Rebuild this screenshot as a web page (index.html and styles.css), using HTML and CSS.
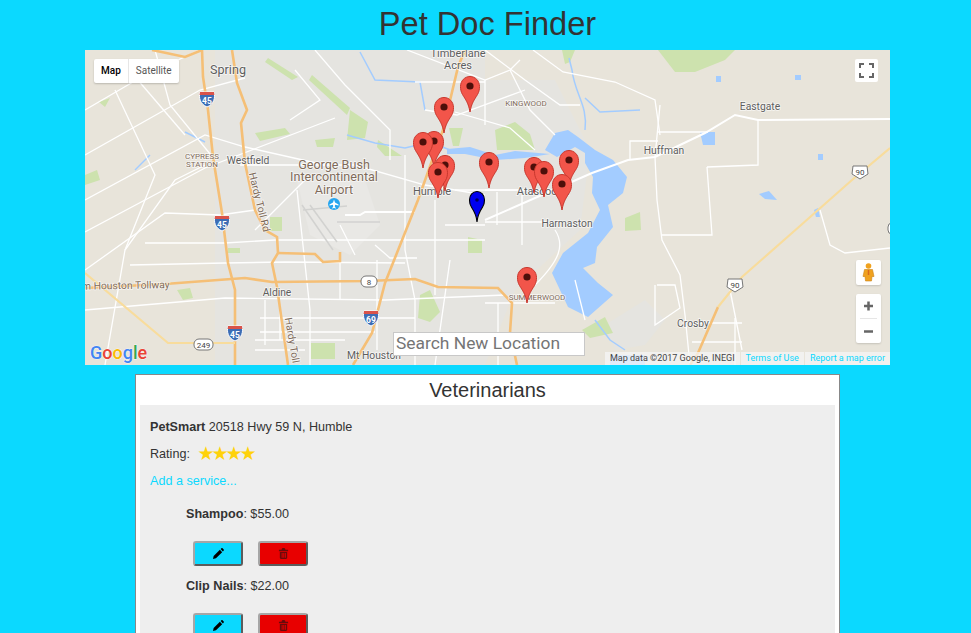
FILE: index.html
```html
<!DOCTYPE html>
<html lang="en">
<head>
<meta charset="UTF-8">
<title>Pet Doc Finder</title>
<link rel="stylesheet" href="styles.css">
</head>
<body>
<h1 class="page-title">Pet Doc Finder</h1>

<div class="map">
  <svg class="map-canvas" viewBox="0 0 805 315" width="805" height="315">
    <defs>
      <symbol id="pin" viewBox="0 0 20 36" overflow="visible">
        <path d="M10 36C8.5 27 5.5 23.5 2.5 18.5C1 16 .5 13.5 .5 10.5C.5 4.8 4.8 .5 10 .5C15.2 .5 19.5 4.8 19.5 10.5C19.5 13.5 19 16 17.5 18.5C14.5 23.5 11.5 27 10 36Z" fill="#f2554a" stroke="#c8372d" stroke-width="1"/>
        <circle cx="10" cy="10" r="3.6" fill="#4d0f0a"/>
      </symbol>
      <symbol id="pin-blue" viewBox="0 0 16 31" overflow="visible">
        <path d="M8 31C7.6 24 5 20 2.4 16C1 13.8 .5 11.8 .5 9C.5 4.2 3.8 .5 8 .5C12.2 .5 15.5 4.2 15.5 9C15.5 11.8 15 13.8 13.6 16C11 20 8.4 24 8 31Z" fill="#0000f0" stroke="#000" stroke-width="1.1"/>
        <circle cx="8" cy="9" r="1.8" fill="#00005a"/>
      </symbol>
      <symbol id="interstate" viewBox="0 0 16 15" overflow="visible">
        <path d="M1 0H15C16.500 6 15 12 8 15C1 12 -.5 6 1 0Z" fill="#3c6db5" stroke="#fff" stroke-width="1"/>
        <path d="M1 0H15L15.400 3H.6Z" fill="#d9534a"/>
      </symbol>
    </defs>

    <!-- land and town areas -->
    <rect width="805" height="315" fill="#e8e4da"/>
    <path class="urban" d="M130 0H400V30H470L505 100L495 180L430 240L400 315H130Z"/>
    <path class="urban" d="M520 275L560 250L580 270L560 295L530 300Z"/>
    <path d="M212 130H280L295 175L265 205L225 185Z" fill="#e9e8e5"/>

    <!-- parks -->
    <g class="park">
      <path d="M183 8L213 27L207 30L180 12Z"/>
      <path d="M227 25L265 58L262 65L224 30Z"/>
      <path d="M265 60L283 72L280 88L262 90Z"/>
      <path d="M230 90L250 88L248 97L232 97Z"/>
      <path d="M293 90L317 106L300 106L292 97Z"/>
      <path d="M170 83L200 78L205 84L175 91Z"/>
      <path d="M185 167H197V181H185Z"/>
      <path d="M143 198H155V203H143Z"/>
      <path d="M92 240L105 238L108 248L98 250Z"/>
      <path d="M226 293H250V309H226Z"/>
      <path d="M335 245L345 240L355 262L345 272L333 268Z"/>
      <path d="M383 187L397 190V203H383Z"/>
      <path d="M364 78H378L374 96L368 96Z"/>
      <path d="M410 80L430 72L445 84L450 100H412Z"/>
      <path d="M477 0H490L485 12L480 14Z"/>
      <path d="M573 0H650L640 10L610 22H590Z" fill="#d3e2bf"/>
      <path d="M497 280L520 267L528 283L505 288Z"/>
      <path d="M540 168L555 162L556 180L540 181Z" fill="#d3e2bf"/>
      <path d="M0 125L12 120L15 130L0 135Z"/>
      <path d="M14 52L25 48L20 57Z"/>
    </g>

    <!-- lake and creeks -->
    <g class="water">
      <path d="M542 127L538 143L523 155L528 177L512 197L510 213L498 218L513 233L528 245L503 267L483 257L467 223L478 203L503 183L515 160L507 143L508 127L500 113L500 103L490 97L472 107L460 100L470 83L483 80L493 87L510 100L528 110Z"/>
      <path d="M362 99L385 97L410 105L430 101L465 104L440 108L410 110L380 104L362 104Z"/>
      <path d="M615 82H630V95H618Z"/>
      <path d="M733 104H738V110H733Z"/>
      <path d="M674 144L684 141L692 150L680 149Z"/>
      <path d="M631 26H636V32H631Z"/>
      <path d="M785 15L792 13L788 23L780 24Z"/>
      <path d="M710 25H716V30H710Z"/>
      <path d="M729 160L733 158L735 167H731Z"/>
      <path d="M525 305H560V315H525Z"/>
    </g>
    <g class="creek">
      <path d="M500 80C503 55 490 45 487 20L484 8"/>
      <path d="M500 48L515 62L555 60"/>
      <path d="M262 85L290 93L320 98L345 92L365 100"/>
      <path d="M275 2L290 30L335 32L340 60"/>
      <path d="M510 270L525 290L540 300"/>
      <path d="M100 82L120 92"/>
      <path d="M65 105L50 120"/>
    </g>

    <!-- local roads -->
    <g class="road-thin">
      <path d="M0 60L60 25L115 0"/><path d="M0 105L115 40L160 28"/><path d="M0 150L120 85L160 97L240 115"/>
      <path d="M0 182L120 118L250 68"/><path d="M0 220L80 163L135 165L170 160"/><path d="M20 315L40 200L90 130L120 115"/>
      <path d="M30 40L70 125L40 200"/><path d="M70 0L85 55L130 110"/><path d="M40 15L100 85"/>
      <path d="M60 193H140L190 190H400"/><path d="M45 215L140 213L200 212L320 213"/><path d="M0 260L140 248L300 250L420 245"/>
      <path d="M175 268H330"/><path d="M175 282H290"/><path d="M170 290H260"/><path d="M170 300H220"/>
      <path d="M205 70L235 50L210 20"/><path d="M230 0L260 35L305 80V110"/><path d="M155 115H270L340 135L400 145"/>
      <path d="M170 180L220 130"/><path d="M212 140L225 260V315"/><path d="M255 175L270 205"/>
      <path d="M320 105V200L330 250V315"/><path d="M292 210V300"/><path d="M255 212V250"/><path d="M180 250V295"/><path d="M195 255V290"/>
      <path d="M350 150V245"/><path d="M365 210L350 315"/><path d="M330 32H400"/>
      <path d="M322 0L400 30L425 20L435 10"/><path d="M400 30V75"/><path d="M340 60L372 65L440 40"/>
      <path d="M370 62L425 78L450 100"/><path d="M425 20L445 60L470 85"/><path d="M400 0L440 30L475 55L495 55"/>
      <path d="M448 0L478 22L530 32L570 50L575 85"/><path d="M575 55L570 107L572 150L577 190L595 225L600 265L605 315"/>
      <path d="M573 82H623"/><path d="M545 110V91H573"/><path d="M608 273H657"/><path d="M607 292H657"/>
      <path d="M622 117L673 115V70"/><path d="M622 117L627 185H577"/><path d="M735 160L745 195L760 203L805 198"/>
      <path d="M572 235H590L595 258L570 275V235"/><path d="M400 140H480"/><path d="M412 142V175"/><path d="M437 145V195"/>
      <path d="M400 172H470"/><path d="M470 180C480 195 475 210 450 235"/><path d="M490 230L500 270"/><path d="M400 253H470"/><path d="M413 253V315"/>
      <path d="M650 268V315"/><path d="M645 240L657 300"/>
      <path d="M332 208H305L290 195"/><path d="M370 140H450"/><path d="M360 175H400"/>
    </g>
    <path class="road-wide" d="M400 170L507 123L543 110L570 107L620 83L650 65L673 70L805 69"/>
    <path class="road-wide" d="M260 165L275 165L280 162H330"/>

    <!-- airport runways -->
    <g class="runway">
      <path d="M217 155L248 200"/><path d="M225 155L252 192"/><path d="M218 160L262 156"/><path d="M252 172H295"/>
    </g>

    <!-- highways -->
    <g class="road-hwy">
      <path d="M67 0L100 7L117 0"/>
      <path d="M117 0L118 27L123 60L128 107L137 163L143 213L150 240V315"/>
      <path d="M147 0L152 33L162 60L156 73L160 113L170 160L180 180L192 187L193 203L187 213L192 237L203 315"/>
      <path d="M193 203L230 204L238 212L255 211V202"/>
      <path d="M0 238L80 234L133 230L160 228L187 232L283 231L330 229L353 237L413 238L427 253L425 283L432 315"/>
      <path d="M380 0L373 17L358 80L333 150L300 233L287 283L268 315"/>
      <path d="M633 257L613 303L605 315"/>
    </g>
    <path class="road-toll" d="M0 223L83 293H150"/>
    <path class="road-toll" d="M805 98L767 130L707 183L657 227L633 257"/>

    <!-- labels -->
    <g class="label">
      <text x="143" y="24" class="label-big">Spring</text>
      <text x="373" y="7" class="label-md">Timberlane</text>
      <text x="373" y="19" class="label-md">Acres</text>
      <text x="163" y="114" class="label-sm">Westfield</text>
      <text x="347" y="145" class="label-md">Humble</text>
      <text x="458" y="145" class="label-md">Atascocita</text>
      <text x="482" y="177" class="label-sm">Harmaston</text>
      <text x="579" y="104" class="label-sm">Huffman</text>
      <text x="675" y="60" class="label-sm">Eastgate</text>
      <text x="608" y="277" class="label-sm">Crosby</text>
      <text x="192" y="246" class="label-sm">Aldine</text>
      <text x="289" y="309" class="label-sm">Mt Houston</text>
    </g>
    <g class="label label-brown">
      <text x="249" y="119" class="label-air">George Bush</text>
      <text x="249" y="131" class="label-air">Intercontinental</text>
      <text x="249" y="144" class="label-air">Airport</text>
      <text x="117" y="109" class="label-area">CYPRESS</text>
      <text x="117" y="117" class="label-area">STATION</text>
      <text x="441" y="56" class="label-area">KINGWOOD</text>
      <text x="452" y="250" class="label-area">SUMMERWOOD</text>
      <text x="35" y="239" transform="rotate(-1 35 239)" class="label-sm">Sam Houston Tollway</text>
      <text x="171" y="153" transform="rotate(76 171 153)" class="label-sm">Hardy Toll Rd</text>
      <text x="205" y="298" transform="rotate(80 205 298)" class="label-sm">Hardy Toll Rd</text>
    </g>

    <!-- shields -->
    <g class="shield-i">
      <use href="#interstate" x="114" y="42" width="16" height="15"/><text x="122" y="54">45</text>
      <use href="#interstate" x="129" y="166" width="16" height="15"/><text x="137" y="178">45</text>
      <use href="#interstate" x="142" y="276" width="16" height="15"/><text x="150" y="288">45</text>
      <use href="#interstate" x="278" y="261" width="16" height="15"/><text x="286" y="273">69</text>
    </g>
    <g class="shield-s">
      <rect x="276" y="226" width="16" height="11" rx="5"/><text x="284" y="234.500">8</text>
      <rect x="109" y="289" width="19" height="11" rx="5"/><text x="118.500" y="297.500">249</text>
      <path d="M768 116H782L783 124L775 129L767 124Z"/><text x="775" y="125">90</text>
      <path d="M643 229H657L658 237L650 242L642 237Z"/><text x="650" y="238">90</text>
      <rect x="803" y="173" width="10" height="11" rx="4"/>
    </g>
    <circle cx="249" cy="154" r="6" fill="#25a5ef"/>
    <path d="M249 149.500L250 152.500L253.500 154.500V155.500L250 154.800L249.800 157L251 158V158.500L249 158L247 158.500V158L248.200 157L248 154.800L244.500 155.500V154.500L248 152.500Z" fill="#fff"/>

    <!-- pins, back to front -->
    <use href="#pin" x="375" y="26" width="20" height="36"/>
    <use href="#pin" x="349" y="47" width="20" height="36"/>
    <use href="#pin" x="339" y="81" width="20" height="36"/>
    <use href="#pin" x="328" y="82" width="20" height="36"/>
    <use href="#pin" x="350" y="105" width="20" height="36"/>
    <use href="#pin" x="343" y="112" width="20" height="36"/>
    <use href="#pin" x="394" y="102" width="20" height="36"/>
    <use href="#pin" x="474" y="100" width="20" height="36"/>
    <use href="#pin" x="439" y="107" width="20" height="36"/>
    <use href="#pin" x="449" y="111" width="20" height="36"/>
    <use href="#pin" x="467" y="124" width="20" height="36"/>
    <use href="#pin" x="432" y="217" width="20" height="36"/>
    <use href="#pin-blue" x="384" y="141" width="16" height="31"/>

    <text class="google" x="5" y="309"><tspan fill="#4285f4">G</tspan><tspan fill="#ea4335">o</tspan><tspan fill="#fbbc05">o</tspan><tspan fill="#4285f4">g</tspan><tspan fill="#34a853">l</tspan><tspan fill="#ea4335">e</tspan></text>
  </svg>

  <div class="map-type">
    <span class="map-type-btn map-type-on">Map</span>
    <span class="map-type-btn">Satellite</span>
  </div>

  <div class="map-ctl fullscreen">
    <svg viewBox="0 0 23 23" width="23" height="23"><path d="M5 9V5H9M14 5H18V9M18 14V18H14M9 18H5V14" fill="none" stroke="#666" stroke-width="2"/></svg>
  </div>

  <div class="map-ctl pegman">
    <svg viewBox="0 0 25 25" width="25" height="25">
      <circle cx="12.500" cy="6" r="2.800" fill="#f0a21f"/>
      <path d="M8.500 9.500H16.500L18 16.500H16L15.500 21H9.500L9 16.500H7Z" fill="#f0a21f" stroke="#c9831a" stroke-width=".6"/>
      <path d="M12.500 10V15" stroke="#d9691e" stroke-width="1.500"/>
    </svg>
  </div>

  <div class="map-ctl zoom">
    <svg viewBox="0 0 25 49" width="25" height="49">
      <path d="M12.500 7.500V16.500M8 12H17" stroke="#666" stroke-width="2.500"/>
      <path d="M4 24.500H21" stroke="#e6e6e6"/>
      <path d="M8 37.500H17" stroke="#666" stroke-width="2.500"/>
    </svg>
  </div>

  <input class="search" type="text" placeholder="Search New Location">

  <div class="attrib">
    <span class="attrib-item attrib-first">Map data ©2017 Google, INEGI</span>
    <a class="attrib-item" href="#">Terms of Use</a>
    <a class="attrib-item" href="#">Report a map error</a>
  </div>
</div>

<div class="vets">
  <h2 class="vets-title">Veterinarians</h2>
  <div class="vet">
    <p class="vet-line"><b>PetSmart</b> 20518 Hwy 59 N, Humble</p>
    <p class="vet-line">Rating: <span class="stars">★★★★</span></p>
    <p class="vet-line"><a class="add-link" href="#">Add a service...</a></p>

    <div class="service">
      <p class="service-name"><b>Shampoo</b>: $55.00</p>
      <div class="service-btns">
        <button class="btn btn-edit" type="button">
          <svg viewBox="0 0 12 12" width="11" height="11"><path d="M0 12L.7 8.800L7.500 2L10 4.500L3.200 11.300ZM8.300 1.200L9.200 .3C9.600 0 10 0 10.400 .3L11.700 1.600C12 2 12 2.400 11.700 2.800L10.800 3.700Z"/></svg>
        </button>
        <button class="btn btn-del" type="button">
          <svg viewBox="0 0 12 12" width="11" height="11"><path d="M1 2H4V1L5 0H7L8 1V2H11V3.500H1ZM2 4.300H10V11L9 12H3L2 11ZM4 5.500V10.500H5V5.500ZM5.800 5.500V10.500H6.800V5.500ZM7.500 5.500V10.500H8.500V5.500Z" fill-rule="evenodd"/></svg>
        </button>
      </div>
    </div>

    <div class="service">
      <p class="service-name"><b>Clip Nails</b>: $22.00</p>
      <div class="service-btns">
        <button class="btn btn-edit" type="button">
          <svg viewBox="0 0 12 12" width="11" height="11"><path d="M0 12L.7 8.800L7.500 2L10 4.500L3.200 11.300ZM8.300 1.200L9.200 .3C9.600 0 10 0 10.400 .3L11.700 1.600C12 2 12 2.400 11.700 2.800L10.800 3.700Z"/></svg>
        </button>
        <button class="btn btn-del" type="button">
          <svg viewBox="0 0 12 12" width="11" height="11"><path d="M1 2H4V1L5 0H7L8 1V2H11V3.500H1ZM2 4.300H10V11L9 12H3L2 11ZM4 5.500V10.500H5V5.500ZM5.800 5.500V10.500H6.800V5.500ZM7.500 5.500V10.500H8.500V5.500Z" fill-rule="evenodd"/></svg>
        </button>
      </div>
    </div>
  </div>
</div>
</body>
</html>
```

FILE: styles.css
```css
html,
body {
  height: 100%;
  overflow: hidden;
}
body {
  margin: 0;
  padding-left: 4px;
  background-color: #0bd9ff;
  color: #333;
  font-family: "Liberation Sans", Arial, sans-serif;
  font-size: 12.6px;
}

.page-title {
  margin: 0;
  height: 50px;
  line-height: 48px;
  font-size: 32.6px;
  font-weight: 400;
  text-align: center;
}

/* map */
.map {
  position: relative;
  width: 805px;
  height: 315px;
  margin: 0 auto;
  overflow: hidden;
  font-family: Roboto, Arial, sans-serif;
}
.map-canvas {
  display: block;
}
.urban {
  fill: #e5e4e0;
}
.park path {
  fill: #cde2ae;
}
.water path {
  fill: #a3ccff;
}
.creek path {
  fill: none;
  stroke: #a3ccff;
  stroke-width: 1.5;
}
.road-thin path {
  fill: none;
  stroke: #fff;
  stroke-width: 1.3;
}
.road-wide {
  fill: none;
  stroke: #fff;
  stroke-width: 2;
}
.runway path {
  fill: none;
  stroke: #d2d2d0;
  stroke-width: 1.5;
}
.road-hwy path {
  fill: none;
  stroke: #f5bf76;
  stroke-width: 2.6;
}
.road-toll {
  fill: none;
  stroke: #f8dc9c;
  stroke-width: 2.2;
}
.label text {
  fill: #5e5e5e;
  text-anchor: middle;
  paint-order: stroke;
  stroke: #fff;
  stroke-width: 1.5;
  stroke-opacity: .7;
}
.label .label-big {
  font-size: 12.6px;
}
.label .label-md {
  font-size: 11px;
}
.label .label-sm {
  font-size: 10.3px;
}
.label-brown text {
  fill: #7f6b5a;
}
.label .label-air {
  font-size: 12.6px;
}
.label .label-area {
  font-size: 8px;
}
.shield-i text {
  font-size: 8.5px;
  font-weight: 700;
  fill: #fff;
  text-anchor: middle;
}
.shield-s rect,
.shield-s path {
  fill: #fff;
  stroke: #777;
}
.shield-s text {
  font-size: 8px;
  fill: #444;
  text-anchor: middle;
}
.google {
  font-family: Roboto, Arial, sans-serif;
  font-size: 18px;
  font-weight: 500;
  paint-order: stroke;
  stroke: #fff;
  stroke-width: 1;
  stroke-opacity: .6;
}

/* controls sitting on the map */
.map-type {
  position: absolute;
  top: 9px;
  left: 9px;
  display: flex;
  background: #fff;
  border-radius: 2px;
  box-shadow: 0 1px 2px rgba(0, 0, 0, .2);
  font-size: 10px;
  line-height: 24px;
}
.map-type-btn {
  padding: 0 7px;
  color: #565656;
}
.map-type-on {
  border-right: 1px solid #e6e6e6;
  color: #000;
  font-weight: 500;
}
.map-ctl {
  position: absolute;
  background: #fff;
  border-radius: 2px;
  box-shadow: 0 1px 2px rgba(0, 0, 0, .15);
}
.map-ctl svg {
  display: block;
}
.fullscreen {
  top: 9px;
  left: 770px;
  width: 23px;
  height: 23px;
  box-shadow: none;
}
.pegman {
  top: 210px;
  left: 771px;
  width: 25px;
  height: 25px;
}
.zoom {
  top: 244px;
  left: 771px;
  width: 25px;
  height: 49px;
}
.search {
  position: absolute;
  top: 282px;
  left: 308px;
  box-sizing: border-box;
  width: 192px;
  height: 24px;
  padding: 0 2px 3px;
  border: 1px solid #c8c8c8;
  background: #fff;
  font-family: Roboto, Arial, sans-serif;
  font-size: 17.4px;
}
.search::placeholder {
  color: #757575;
}
.attrib {
  position: absolute;
  right: 0;
  bottom: 0;
  display: flex;
  gap: 1px;
  font-size: 9px;
  line-height: 13px;
}
.attrib-item {
  padding: 0 5px;
  background: rgba(245, 245, 245, .75);
  color: #0bd9ff;
  text-decoration: none;
}
.attrib-first {
  color: #444;
}

/* vet list */
.vets {
  box-sizing: border-box;
  width: 705px;
  margin: 9px 0 0 131px;
  padding: 0 4px;
  border: 1px solid #888;
  background: #fff;
}
.vets-title {
  margin: 0;
  height: 30px;
  line-height: 30px;
  font-size: 20px;
  font-weight: 400;
  text-align: center;
}
.vet {
  padding: 14px 10px 8px;
  background: #eee;
}
.vet-line {
  margin: 0 0 10px;
  line-height: 17px;
}
.stars {
  margin-left: 4px;
  color: #ffd20a;
  font-family: "DejaVu Sans", sans-serif;
  font-size: 19px;
  letter-spacing: -3px;
  line-height: 0;
  vertical-align: -2px;
}
.add-link {
  color: #0bd9ff;
  text-decoration: none;
}
.service {
  padding-left: 36px;
}
.service-name {
  margin: 0;
  padding-top: 6px;
  line-height: 17px;
}
.service-btns {
  display: flex;
  gap: 15px;
  padding: 18px 8px 6px 7px;
}
.btn {
  display: flex;
  align-items: center;
  justify-content: center;
  box-sizing: border-box;
  width: 50px;
  height: 25px;
  padding: 0;
  border: 2px solid;
  border-color: #a6a6a6 #5c5c5c #5c5c5c #a6a6a6;
  border-radius: 3px;
}
.btn-edit {
  background: #0bd9ff;
}
.btn-del {
  background: #e80000;
  fill: #6a0a0a;
}
```
